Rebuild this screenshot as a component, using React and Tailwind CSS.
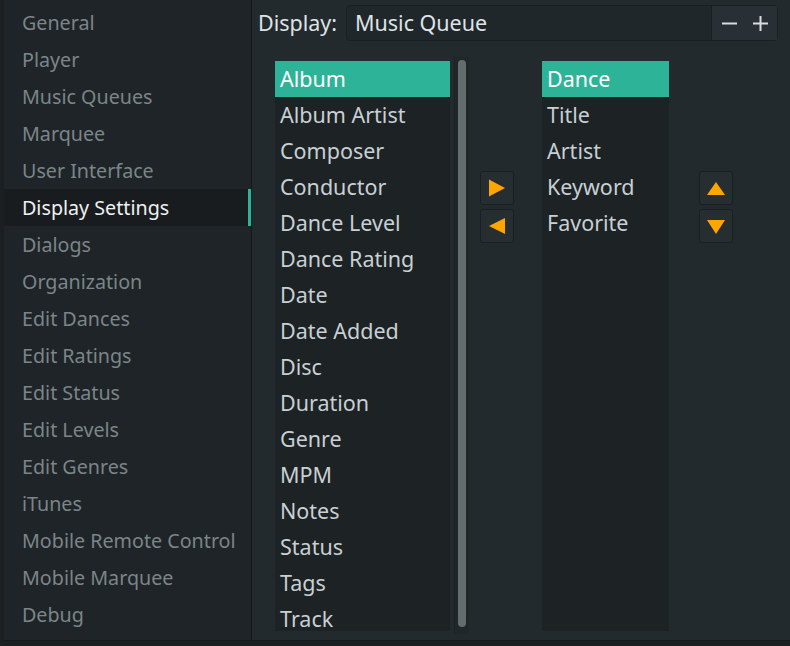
import React from 'react';

const pages = [
  'General', 'Player', 'Music Queues', 'Marquee', 'User Interface', 'Display Settings',
  'Dialogs', 'Organization', 'Edit Dances', 'Edit Ratings', 'Edit Status', 'Edit Levels',
  'Edit Genres', 'iTunes', 'Mobile Remote Control', 'Mobile Marquee', 'Debug',
];

const available = [
  'Album', 'Album Artist', 'Composer', 'Conductor', 'Dance Level', 'Dance Rating', 'Date',
  'Date Added', 'Disc', 'Duration', 'Genre', 'MPM', 'Notes', 'Status', 'Tags', 'Track',
];

const shown = ['Dance', 'Title', 'Artist', 'Keyword', 'Favorite'];

const ArrowBtn = ({ dir }) => {
  const pts = {
    right: '1,0.5 17,9 1,17.5',
    left: '17,1 1,9 17,17',
    up: '0,16 9,3 18,16',
    down: '0,3 9,17 18,3',
  }[dir];
  return (
    <button className="flex h-[34px] w-[34px] items-center justify-center rounded-[3px] border border-[#1a1f21] bg-[#272e32]">
      <svg width="18" height="18" viewBox="0 0 18 18">
        <polygon points={pts} fill="#ffa500" />
      </svg>
    </button>
  );
};

const App = () => {
  return (
    <div className="flex h-[646px] w-[790px] bg-[#1b1f21] pl-[4px] pb-[5px] leading-none" style={{ fontFamily: '"Noto Sans", "Open Sans", sans-serif' }}>
      {/* Sidebar */}
      <div className="flex w-[248px] flex-col border-r border-b border-[#15181a] bg-[#1e2427] pt-[4px] text-[19.7px]">
        {pages.map((p) => (
          <div
            key={p}
            className={
              p === 'Display Settings'
                ? 'flex h-[37px] shrink-0 items-center justify-between bg-[#181c1e] pl-[18px] text-[#eff0f1]'
                : 'flex h-[37px] shrink-0 items-center pl-[18px] text-[#7c8588]'
            }
          >
            <span>{p}</span>
            {p === 'Display Settings' && <span className="h-full w-[3px] bg-[#2db398]" />}
          </div>
        ))}
      </div>

      {/* Main panel */}
      <div className="flex flex-1 flex-col border-b border-[#15181a] bg-[#232a2d] text-[21.5px]">
        <div className="mt-[5px] flex h-[36px] items-center">
          <span className="ml-[6px] w-[88px] text-[#dfe3e5]">Display:</span>
          <div className="flex h-[36px] w-[432px] items-stretch rounded-[4px] border border-[#1a1f21] bg-[#20272a]">
            <div className="flex flex-1 items-center pl-[8px] text-[#dfe3e5]">Music Queue</div>
            <div className="flex w-[66px] items-center justify-center gap-[16px] border-l border-[#1a1f21] bg-[#283035]">
              <svg width="15" height="15" viewBox="0 0 15 15"><rect x="0" y="6.5" width="15" height="2" fill="#d8dcde" /></svg>
              <svg width="15" height="15" viewBox="0 0 15 15"><rect x="0" y="6.5" width="15" height="2" fill="#d8dcde" /><rect x="6.5" y="0" width="2" height="15" fill="#d8dcde" /></svg>
            </div>
          </div>
        </div>

        <div className="mt-[16px] flex h-[577px] items-start">
          {/* Available fields */}
          <div className="ml-[23px] mt-[4px] h-[570px] w-[175px] overflow-hidden bg-[#1d2225]">
            {available.map((f, i) => (
              <div
                key={f}
                className={
                  i === 0
                    ? 'flex h-[36px] items-center bg-[#2db398] pl-[5px] text-white'
                    : 'flex h-[36px] items-center pl-[5px] text-[#c8d0d3]'
                }
              >
                {f}
              </div>
            ))}
          </div>

          {/* Scrollbar */}
          <div className="ml-[4px] flex h-[577px] w-[15px] justify-center border-l border-[#1c2124] bg-[#202729] pt-[3px]">
            <div className="h-[567px] w-[8px] rounded-full bg-[#646d6d]" />
          </div>

          {/* Move buttons */}
          <div className="ml-[11px] mt-[114px] flex flex-col gap-[4px]">
            <ArrowBtn dir="right" />
            <ArrowBtn dir="left" />
          </div>

          {/* Displayed fields */}
          <div className="ml-[28px] mt-[4px] h-[570px] w-[127px] bg-[#1d2225]">
            {shown.map((f, i) => (
              <div
                key={f}
                className={
                  i === 0
                    ? 'flex h-[36px] items-center bg-[#2db398] pl-[5px] text-white'
                    : 'flex h-[36px] items-center pl-[5px] text-[#c8d0d3]'
                }
              >
                {f}
              </div>
            ))}
          </div>

          {/* Order buttons */}
          <div className="ml-[30px] mt-[114px] flex flex-col gap-[4px]">
            <ArrowBtn dir="up" />
            <ArrowBtn dir="down" />
          </div>
        </div>
      </div>
    </div>
  );
};

export default App;
